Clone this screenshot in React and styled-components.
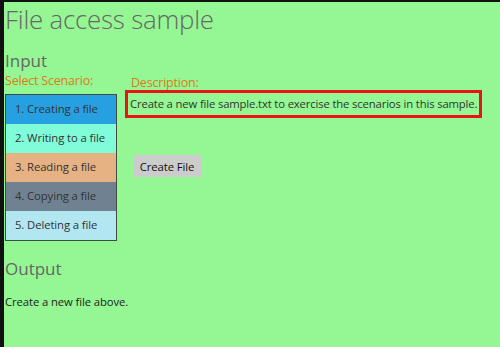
import React from "react";
import styled, { createGlobalStyle } from "styled-components";

const Global = createGlobalStyle`
  html, body { margin: 0; padding: 0; background: #98f898; }
  body { font-family: "Open Sans", "Noto Sans", sans-serif; }
`;

const Page = styled.div`
  box-sizing: border-box;
  width: 500px;
  height: 347px;
  overflow: hidden;
  background: #94f794;
  border-top: 2px solid #111;
  border-left: 4px solid #111;
  padding: 0 0 0 1px;
  color: #333;
`;

const Title = styled.h1`
  margin: 0;
  height: 48px;
  font-size: 25.8px;
  font-weight: 300;
  line-height: 34px;
  color: #666;
  letter-spacing: -0.2px;
`;

const Heading = styled.h2`
  margin: 0;
  font-size: 17px;
  font-weight: 400;
  line-height: 22px;
  color: #666;
`;

const Columns = styled.div`
  display: flex;
  align-items: flex-start;
  margin-top: 1px;
`;

const LeftCol = styled.div`
  display: flex;
  flex-direction: column;
  width: 120px;
`;

const Label = styled.div`
  font-size: 12.5px;
  line-height: 16px;
  color: #e07818;
  letter-spacing: -0.2px;
`;

const List = styled.div`
  margin-top: 5px;
  width: 112px;
  box-sizing: border-box;
  border: 1.5px solid #3e4e3e;
  display: flex;
  flex-direction: column;
`;

const Item = styled.div`
  height: 29px;
  line-height: 28px;
  padding-left: 9px;
  font-size: 11.3px;
  color: #333;
  background: ${(p) => p.$bg};
  letter-spacing: -0.1px;
`;

const RightCol = styled.div`
  display: flex;
  flex-direction: column;
  align-items: flex-start;
  padding-top: 2px;
`;

const DescLabel = styled(Label)`
  padding-left: 6px;
  height: 15px;
`;

const DescBox = styled.div`
  width: 357px;
  box-sizing: border-box;
  border: 3px solid #e81414;
  padding: 1px 0 0 2px;
  height: 28px;
  font-size: 11.3px;
  line-height: 20px;
  color: #333;
  letter-spacing: -0.15px;
  white-space: nowrap;
`;

const Button = styled.button`
  margin-top: 37px;
  margin-left: 8px;
  width: 68px;
  height: 22px;
  border: none;
  padding: 0;
  background: #cccccc;
  font-family: inherit;
  font-size: 11.3px;
  color: #111;
  letter-spacing: -0.1px;
`;

const OutputSection = styled.section`
  margin-top: 17px;
`;

const OutputText = styled.div`
  margin-top: 14px;
  font-size: 11.3px;
  color: #222;
  letter-spacing: -0.1px;
`;

const scenarios = [
  { label: "1. Creating a file", bg: "#27a0e2" },
  { label: "2. Writing to a file", bg: "#80fcd8" },
  { label: "3. Reading a file", bg: "#e6b284" },
  { label: "4. Copying a file", bg: "#708292" },
  { label: "5. Deleting a file", bg: "#b2e6f0" },
];

export default function App() {
  return (
    <>
      <Global />
      <Page>
        <Title>File access sample</Title>
        <Heading>Input</Heading>
        <Columns>
          <LeftCol>
            <Label>Select Scenario:</Label>
            <List>
              {scenarios.map((s) => (
                <Item key={s.label} $bg={s.bg}>
                  {s.label}
                </Item>
              ))}
            </List>
          </LeftCol>
          <RightCol>
            <DescLabel>Description:</DescLabel>
            <DescBox>
              Create a new file sample.txt to exercise the scenarios in this sample.
            </DescBox>
            <Button>Create File</Button>
          </RightCol>
        </Columns>
        <OutputSection>
          <Heading>Output</Heading>
          <OutputText>Create a new file above.</OutputText>
        </OutputSection>
      </Page>
    </>
  );
}
